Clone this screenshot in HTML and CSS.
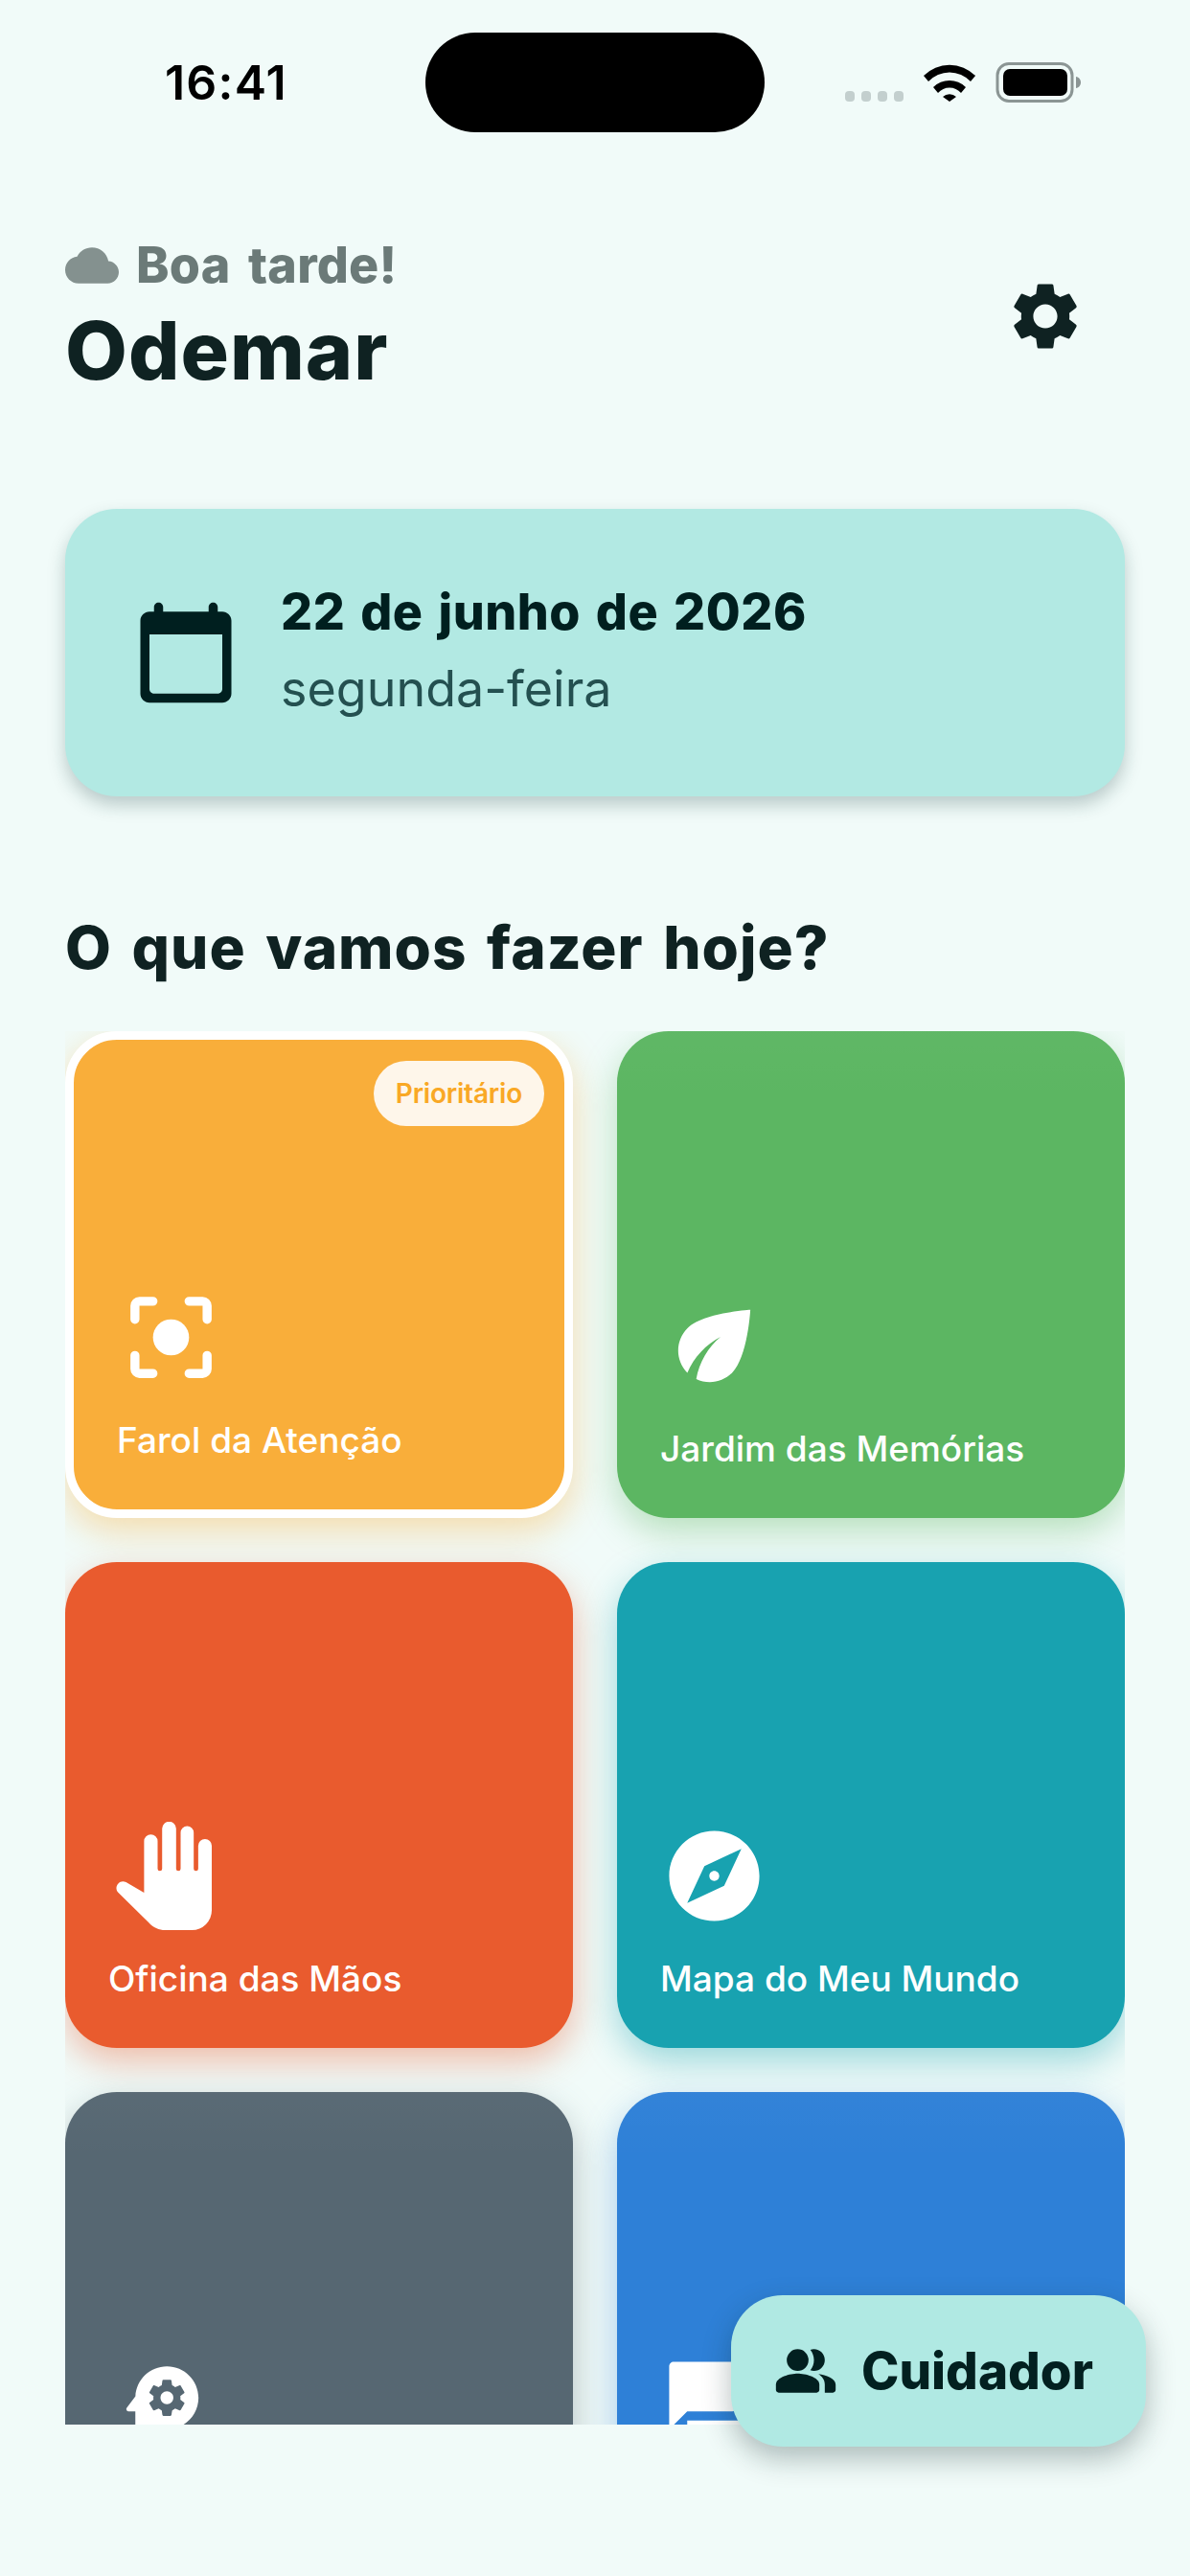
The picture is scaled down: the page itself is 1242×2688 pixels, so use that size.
FILE: index.html
```html
<!DOCTYPE html>
<html lang="pt-BR">
<head>
<meta charset="utf-8">
<title>Odemar</title>
<link rel="stylesheet" href="styles.css">
</head>
<body>
<main class="screen">
  <div class="status">
    <span class="time">16:41</span>
    <div class="island"></div>
    <svg class="status-icons" viewBox="0 0 246 42" width="246" height="42">
      <rect x="0" y="30" width="10" height="11" rx="4" fill="#c3cfce"/>
      <rect x="17" y="30" width="10" height="11" rx="4" fill="#c3cfce"/>
      <rect x="34" y="30" width="10" height="11" rx="4" fill="#c3cfce"/>
      <rect x="51" y="30" width="10" height="11" rx="4" fill="#c3cfce"/>
      <path d="M136 14 A38 38 0 0 0 82 14 L87 20 A30 30 0 0 1 131 20Z M126 26 A24 24 0 0 0 92 26 L97 32 A16 16 0 0 1 121 32Z M102 36 A10 10 0 0 1 116 36 L109 41Z" fill="#000"/>
      <rect x="159" y="1.500" width="78" height="39" rx="12" fill="none" stroke="#8b9594" stroke-width="3"/>
      <rect x="165" y="7" width="67" height="28" rx="7" fill="#000"/>
      <path d="M241 15c3 .5 5 3 5 6s-2 5.500-5 6Z" fill="#8b9594"/>
    </svg>
  </div>

  <header class="top">
    <div>
      <div class="greeting">
        <svg class="cloud" viewBox="0 0 24 24"><path d="M19.35 10.04C18.67 6.59 15.64 4 12 4 9.11 4 6.6 5.64 5.35 8.04 2.34 8.36 0 10.91 0 14c0 3.31 2.69 6 6 6h13c2.76 0 5-2.24 5-5 0-2.64-2.05-4.78-4.65-4.96z"/></svg>
        <span>Boa tarde!</span>
      </div>
      <h1 class="name">Odemar</h1>
    </div>
    <svg class="gear" viewBox="0 0 24 24"><path d="M19.14,12.94c0.04-0.3,0.06-0.61,0.06-0.94c0-0.32-0.02-0.64-0.07-0.94l2.03-1.58c0.18-0.14,0.23-0.41,0.12-0.61 l-1.92-3.32c-0.12-0.22-0.37-0.29-0.59-0.22l-2.39,0.96c-0.5-0.38-1.03-0.7-1.62-0.94L14.4,2.81c-0.04-0.24-0.24-0.41-0.48-0.41 h-3.84c-0.24,0-0.43,0.17-0.47,0.41L9.25,5.35C8.66,5.59,8.12,5.92,7.63,6.29L5.24,5.33c-0.22-0.08-0.47,0-0.59,0.22L2.74,8.87 C2.62,9.08,2.66,9.34,2.86,9.48l2.03,1.58C4.84,11.36,4.8,11.69,4.8,12s0.02,0.64,0.07,0.94l-2.03,1.58 c-0.18,0.14-0.23,0.41-0.12,0.61l1.92,3.32c0.12,0.22,0.37,0.29,0.59,0.22l2.39-0.96c0.5,0.38,1.03,0.7,1.62,0.94l0.36,2.54 c0.05,0.24,0.24,0.41,0.48,0.41h3.84c0.24,0,0.44-0.17,0.47-0.41l0.36-2.54c0.59-0.24,1.13-0.56,1.62-0.94l2.39,0.96 c0.22,0.08,0.47,0,0.59-0.22l1.92-3.32c0.12-0.22,0.07-0.47-0.12-0.61L19.14,12.94z M12,15.6c-1.98,0-3.6-1.62-3.6-3.6 s1.62-3.6,3.6-3.6s3.6,1.62,3.6,3.6S13.98,15.6,12,15.6z"/></svg>
  </header>

  <section class="date-card">
    <svg class="date-icon" viewBox="0 0 24 24"><path d="M20 3h-1V2c0-.55-.45-1-1-1s-1 .45-1 1v1H7V2c0-.55-.45-1-1-1s-1 .45-1 1v1H4c-1.100 0-2 .9-2 2v16c0 1.100.9 2 2 2h16c1.100 0 2-.9 2-2V5c0-1.100-.9-2-2-2zm-1 18H5c-.55 0-1-.45-1-1V8h16v12c0 .55-.45 1-1 1z"/></svg>
    <div class="date-text">
      <div class="date-main">22 de junho de 2026</div>
      <div class="date-sub">segunda-feira</div>
    </div>
  </section>

  <h2 class="section-title">O que vamos fazer hoje?</h2>

  <div class="scroller">
    <div class="grid">
      <article class="card card-orange">
        <span class="badge">Prioritário</span>
        <svg class="card-icon" viewBox="0 0 24 24"><circle cx="12" cy="12" r="4"/><path class="strokes" d="M4 8V5a1 1 0 0 1 1-1h3M16 4h3a1 1 0 0 1 1 1v3M20 16v3a1 1 0 0 1-1 1h-3M8 20H5a1 1 0 0 1-1-1v-3"/></svg>
        <span class="label">Farol da Atenção</span>
      </article>
      <article class="card card-green">
        <svg class="card-icon" viewBox="0 0 24 24"><path d="M6.05 8.05c-2.73 2.73-2.73 7.15-.02 9.88 1.47-3.4 4.09-6.24 7.36-7.93-2.77 2.34-4.71 5.61-5.39 9.32 2.6 1.23 5.8.78 7.95-1.37C19.43 14.47 20 4 20 4S9.53 4.57 6.05 8.05z"/></svg>
        <span class="label">Jardim das Memórias</span>
      </article>
      <article class="card card-red">
        <svg class="card-icon" viewBox="-0.64 0 24 24"><path d="M22.3 5.3V19.6a4.400 4.400 0 0 1-4.400 4.400H12c-1.400 0-2.700-.6-3.600-1.600L1.500 15.600c-1-1.200.4-3 1.800-2.200L7.300 15.700V4.300a1.500 1.500 0 0 1 3 0V10.400a.5.5 0 0 0 1 0V1.500a1.550 1.550 0 0 1 3.100 0V10.400a.5.5 0 0 0 1 0V2.400a1.450 1.450 0 0 1 2.900 0V10.400a.5.5 0 0 0 1 0V5.300a1.500 1.500 0 0 1 3 0z"/></svg>
        <span class="label">Oficina das Mãos</span>
      </article>
      <article class="card card-teal">
        <svg class="card-icon" viewBox="0 0 24 24"><path d="M12 10.9c-.61 0-1.100.49-1.100 1.100s.49 1.100 1.100 1.100c.61 0 1.100-.49 1.100-1.100s-.49-1.100-1.100-1.100zM12 2C6.480 2 2 6.480 2 12s4.480 10 10 10 10-4.480 10-10S17.520 2 12 2zm2.190 12.190L6 18l3.810-8.190L18 6l-3.810 8.190z"/></svg>
        <span class="label">Mapa do Meu Mundo</span>
      </article>
      <article class="card card-slate card-cut">
        <svg class="card-icon" viewBox="0 0 24 24"><path d="M13 8.570c-.79 0-1.430.64-1.430 1.430s.64 1.430 1.430 1.430 1.430-.64 1.430-1.430-.64-1.430-1.430-1.430z"/><path d="M13 3C9.250 3 6.200 5.940 6.020 9.640L4.100 12.200c-.25.33-.01.8.4.8H6v3c0 1.100.9 2 2 2h1v3h7v-4.680c2.360-1.120 4-3.530 4-6.320 0-3.870-3.130-7-7-7zm3 7c0 .13-.01.26-.02.39l.83.66c.08.06.1.16.05.25l-.8 1.390c-.05.09-.16.12-.24.09l-.99-.4c-.21.16-.43.29-.67.39L14 13.830c-.01.1-.1.17-.2.17h-1.600c-.1 0-.18-.07-.2-.17l-.15-1.060c-.25-.1-.47-.23-.68-.39l-.99.4c-.09.03-.2 0-.25-.09l-.8-1.390c-.05-.08-.03-.19.05-.25l.84-.66c-.01-.13-.02-.26-.02-.39s.02-.27.04-.39l-.85-.66c-.08-.06-.1-.16-.05-.26l.8-1.380c.05-.09.15-.12.24-.09l1 .4c.2-.15.43-.29.67-.39L12 6.170c.02-.1.1-.17.2-.17h1.600c.1 0 .18.07.2.17l.15 1.060c.24.1.46.23.67.39l1-.4c.09-.03.2 0 .24.09l.8 1.380c.05.09.03.2-.05.26l-.85.66c.03.12.04.25.04.39z"/></svg>
      </article>
      <article class="card card-blue card-cut">
        <svg class="card-icon" viewBox="0 0 24 24"><path d="M21 6h-2v9H6v2c0 .55.45 1 1 1h11l4 4V7c0-.55-.45-1-1-1zm-4 6V3c0-.55-.45-1-1-1H3c-.55 0-1 .45-1 1v14l4-4h10c.55 0 1-.45 1-1z"/></svg>
      </article>
    </div>
  </div>

  <button class="fab" type="button">
    <svg class="fab-icon" viewBox="0 0 24 24"><path d="M16.670 13.130C18.040 14.060 19 15.320 19 17v3h3c.55 0 1-.45 1-1v-2c0-2.180-3.570-3.470-6.330-3.870z"/><circle cx="9" cy="8" r="4"/><path d="M15 12c2.210 0 4-1.790 4-4s-1.790-4-4-4c-.47 0-.91.1-1.330.26C14.500 5.290 15 6.590 15 8s-.5 2.710-1.330 3.740c.42.16.86.26 1.330.26z"/><path d="M9 13c-2.670 0-8 1.340-8 4v2c0 .55.45 1 1 1h14c.55 0 1-.45 1-1v-2c0-2.660-5.330-4-8-4z"/></svg>
    <span>Cuidador</span>
  </button>
</main>
</body>
</html>
```
FILE: styles.css
```css
* { box-sizing: border-box; }
html, body { margin: 0; padding: 0; }
body { background: #f1fbf9; font-family: Inter, "Noto Sans", sans-serif; }
.screen { position: relative; width: 1242px; height: 2688px; overflow: hidden; background: #f1fbf9; }

.status { display: flex; align-items: center; padding: 34px 0 0 172px; height: 138px; }
.time { width: 272px; font-size: 50px; font-weight: 600; line-height: 104px; color: #000; letter-spacing: 1.2px; }
.island { width: 354px; height: 104px; border-radius: 52px; background: #000; }
.status-icons { margin-left: 84px; display: block; }

.top { display: flex; justify-content: space-between; align-items: center; padding: 108px 109px 0 68px; }
.greeting { display: flex; align-items: center; gap: 18px; color: #6b7a78; font-size: 52px; font-weight: 800; line-height: 62px; letter-spacing: .2px; word-spacing: 7px; }
.cloud { width: 56px; height: 56px; fill: #84918f; }
.name { margin: 8px 0 0; font-size: 84px; font-weight: 800; line-height: 100px; color: #0f2222; letter-spacing: 1px; }
.gear { width: 84px; height: 84px; margin-bottom: 3px; fill: #0f2222; }

.date-card { display: flex; align-items: center; gap: 42px; height: 300px; margin: 115px 68px 0; padding: 0 69px; background: #b2e9e3; border-radius: 54px; box-shadow: 0 9px 18px rgba(20, 60, 60, .25); }
.date-icon { width: 114px; height: 114px; fill: #001f1f; flex: none; }
.date-text { padding-bottom: 5px; }
.date-main { font-size: 52px; font-weight: 800; line-height: 72px; color: #001f1f; letter-spacing: .5px; word-spacing: 4px; }
.date-sub { font-size: 52px; font-weight: 400; line-height: 72px; color: #245050; margin-top: 8px; }

.section-title { margin: 116px 68px 0; font-size: 62px; font-weight: 800; line-height: 84px; color: #0f2222; letter-spacing: 1px; word-spacing: 6px; }

.scroller { height: 1454px; margin: 45px 68px 0; overflow: hidden; }
.grid { display: grid; grid-template-columns: 530px 530px; grid-auto-rows: 507.5px; gap: 46px; }
.card { position: relative; display: flex; flex-direction: column; justify-content: flex-end; align-items: flex-start; padding: 45px; border-radius: 54px; background-image: linear-gradient(rgba(255, 255, 255, .025), rgba(255, 255, 255, 0) 70px); }
.card-cut { padding-bottom: 123px; }
.card-icon { width: 113px; height: 113px; fill: #fff; flex: none; }
.strokes { fill: none; stroke: #fff; stroke-width: 2; stroke-linecap: round; stroke-linejoin: round; }
.label { margin-top: 24px; font-size: 37px; font-weight: 550; line-height: 54px; color: #fff; white-space: nowrap; }

.card-orange { background-color: #f9ae3a; background-image: none; border: 9px solid #fff; box-shadow: 0 14px 36px rgba(250, 176, 59, .4); }
.card-green { background-color: #5cb662; box-shadow: 0 14px 36px rgba(94, 183, 100, .4); }
.card-red { background-color: #e95b2e; background-image: none; box-shadow: 0 14px 36px rgba(234, 92, 47, .4); }
.card-teal { background-color: #18a2b0; background-image: none; box-shadow: 0 14px 36px rgba(24, 162, 176, .4); }
.card-slate { background-color: #566772; box-shadow: 0 14px 36px rgba(87, 104, 115, .4); }
.card-blue { background-color: #2e80d7; box-shadow: 0 14px 36px rgba(47, 129, 215, .4); }

.badge { position: absolute; top: 22px; right: 21px; height: 68px; padding: 0 23px; border-radius: 34px; background: #fef6ea; color: #f9a825; font-size: 28px; font-weight: 600; line-height: 68px; letter-spacing: -.2px; }

.fab { position: absolute; left: 763px; top: 2395px; display: flex; align-items: center; gap: 24px; width: 433px; height: 158px; padding: 0 44px; border: 0; border-radius: 54px; background: #b0e9e3; color: #022020; font-family: inherit; font-size: 53px; font-weight: 800; box-shadow: 0 12px 30px rgba(10, 40, 40, .3); }
.fab-icon { width: 68px; height: 68px; fill: #022020; flex: none; }
```
